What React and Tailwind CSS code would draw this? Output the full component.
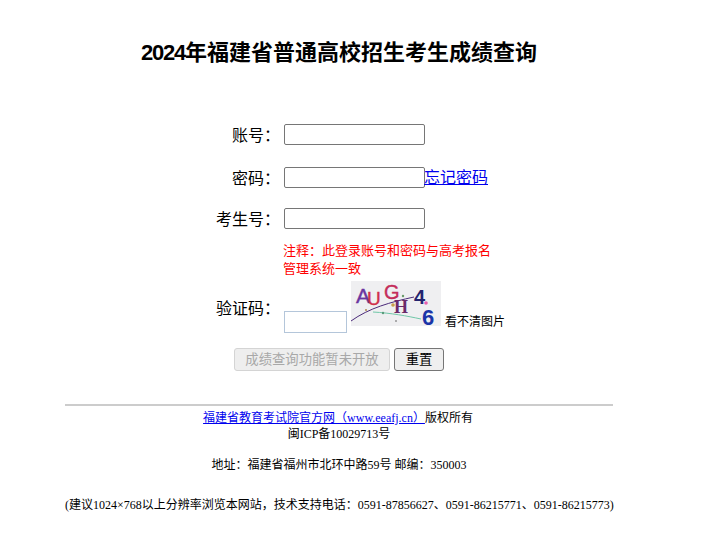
import React from "react";

const cjk = "font-['Liberation_Sans','Noto_Sans_CJK_SC',sans-serif]";
const serif = "font-['Liberation_Serif','Noto_Sans_CJK_SC',serif]";

function Label({ children }) {
  return <div className="h-[21px] w-[219px] pt-[1px] pr-[4px] text-right text-[16px] leading-[21px] text-black">{children}</div>;
}

function Field() {
  return <input className="h-[21px] w-[141px] rounded-[2px] border border-[#767676] bg-white" />;
}

function Captcha() {
  return (
    <svg width="90" height="45" viewBox="0 0 90 45" className="block bg-[#efeff1]">
      <path d="M0 40 C18 27 40 21 63 16" fill="none" stroke="#4b2a7a" strokeWidth="1" />
      <path d="M22 31 C40 32 56 35 70 38" fill="none" stroke="#6fc7a8" strokeWidth="1" />
      <circle cx="75" cy="22" r="1.8" fill="#e860b0" />
      <circle cx="42" cy="24" r="1.8" fill="#c9a04a" />
      <circle cx="32" cy="32" r="1.2" fill="#5a9a7a" />
      <circle cx="52" cy="15" r="1.2" fill="#6a9a6a" />
      <circle cx="15" cy="29" r="1" fill="#b08a50" />
      <circle cx="45" cy="40" r="0.8" fill="#555" />
      <text x="5" y="22" fontFamily="Liberation Sans" fontSize="21" stroke="#6a35a0" strokeWidth="0.4" fill="#6a35a0">A</text>
      <text x="16" y="24" fontFamily="Liberation Sans" fontSize="19" stroke="#d0304a" strokeWidth="0.4" fill="#d0304a">U</text>
      <text x="33" y="18" fontFamily="Liberation Sans" fontSize="20" stroke="#c42c5a" strokeWidth="0.4" fill="#c42c5a">G</text>
      <text x="43" y="32" fontFamily="Liberation Serif" fontSize="18" fontWeight="700" fill="#6a2a6a">H</text>
      <text x="63" y="23" fontFamily="Liberation Sans" fontSize="20" fontWeight="700" fill="#23236e">4</text>
      <text x="71" y="44" fontFamily="Liberation Sans" fontSize="22" fontWeight="700" fill="#1a35a8">6</text>
    </svg>
  );
}

export default function App() {
  return (
    <div className={`${cjk} mx-auto h-[544px] w-[722px] bg-white text-black`}>
      <h1 className="pt-[38px] pl-[65px] w-[613px] text-center text-[22px] font-bold leading-[30px]">
        <span className="tracking-[-1.2px]">2024</span>年福建省普通高校招生考生成绩查询
      </h1>

      <div className="ml-[65px] mt-[56px] w-[548px]">
        <div className="flex items-center">
          <Label>账号：</Label>
          <Field />
        </div>
        <div className="mt-[22px] flex items-center">
          <Label>密码：</Label>
          <Field />
          <a href="#" className="-ml-[1px] text-[16px] leading-[21px] text-[#0000ee] underline">忘记密码</a>
        </div>
        <div className="mt-[20px] flex items-center">
          <Label>考生号：</Label>
          <Field />
        </div>
        <div className="mt-[13px] ml-[218px] w-[210px] text-[13px] leading-[18px] text-[#ff0000]">
          注释：此登录账号和密码与高考报名管理系统一致
        </div>
        <div className="mt-[3px] flex items-start">
          <div className="mt-[16px]"><Label>验证码：</Label></div>
          <input className="mt-[30px] h-[22px] w-[63px] border border-[#b4c6da] bg-white" />
          <div className="ml-[4px]"><Captcha /></div>
          <span className="ml-[4px] mt-[33px] whitespace-nowrap text-[12px] leading-[16px]">看不清图片</span>
        </div>
        <div className="mt-[15px] ml-[169px] flex gap-[4px]">
          <button disabled className="h-[23px] w-[156px] rounded-[3px] border border-[#d4d4d4] bg-[#eeeeee] text-[13.33px] text-[#a8a8a8]">
            成绩查询功能暂未开放
          </button>
          <button className="h-[23px] w-[50px] rounded-[3px] border border-[#767676] bg-[#efefef] text-[13.33px] text-black">
            重置
          </button>
        </div>
        <div className="mt-[33px] h-[2px] bg-[#cccccc]" />
      </div>

      <div className={`${serif} ml-[65px] mt-[4px] w-[548px] text-center text-[12px] leading-[16px]`}>
        <div className="-ml-[2px]">
          <a href="#" className="text-[#0000ee] underline">福建省教育考试院官方网（www.eeafj.cn）</a>版权所有
        </div>
        <div>闽ICP备10029713号</div>
        <div className="mt-[15px]">地址：福建省福州市北环中路59号 邮编：350003</div>
        <div className="mt-[24px] whitespace-nowrap">(建议1024×768以上分辨率浏览本网站，技术支持电话：0591-87856627、0591-86215771、0591-86215773)</div>
      </div>
    </div>
  );
}
